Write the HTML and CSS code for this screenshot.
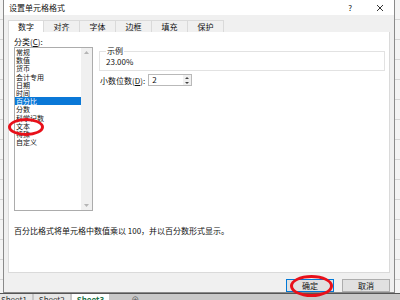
FILE: index.html
```html
<!DOCTYPE html>
<html lang="zh-CN">
  <head>
    <meta charset="UTF-8" />
    <title>设置单元格格式</title>
    <link rel="stylesheet" href="styles.css">
  </head>
  <body>
    <div class="screen">
      <div class="dialog">
        <div class="titlebar">
          <span class="title">设置单元格格式</span>
          <span class="help">?</span>
          <span class="close">
            <svg width="8" height="8" viewBox="0 0 8 8"><path d="M1 1L7 7M7 1L1 7" stroke="#333" stroke-width="1"/></svg>
          </span>
        </div>
        <div class="dialog-body">
          <div class="tabs">
            <div class="tab active">数字</div>
            <div class="tab">对齐</div>
            <div class="tab">字体</div>
            <div class="tab">边框</div>
            <div class="tab">填充</div>
            <div class="tab">保护</div>
          </div>
          <div class="panel">
            <div class="label">分类(<u>C</u>):</div>
            <div class="main-row">
              <div class="listbox">
                <ul class="items">
                  <li>常规</li>
                  <li>数值</li>
                  <li>货币</li>
                  <li>会计专用</li>
                  <li>日期</li>
                  <li>时间</li>
                  <li class="selected">百分比</li>
                  <li>分数</li>
                  <li>科学记数</li>
                  <li>文本</li>
                  <li>特殊</li>
                  <li>自定义</li>
                </ul>
                <div class="scrollbar">
                  <svg width="5" height="3" viewBox="0 0 5 3"><path d="M0 3L2.5 0L5 3Z" fill="#b5b5b5"/></svg>
                  <svg width="5" height="3" viewBox="0 0 5 3"><path d="M0 0L2.5 3L5 0Z" fill="#b5b5b5"/></svg>
                </div>
              </div>
              <div class="options">
                <fieldset class="sample">
                  <legend>示例</legend>
                  <div class="sample-value">23.00%</div>
                </fieldset>
                <div class="spin-row">
                  <span>小数位数(<u>D</u>):</span>
                  <div class="spinbox">
                    <span class="spin-value">2</span>
                    <span class="spin-buttons">
                      <svg width="4" height="2" viewBox="0 0 4 2"><path d="M0 2L2 0L4 2Z" fill="#444"/></svg>
                      <svg width="4" height="2" viewBox="0 0 4 2"><path d="M0 0L2 2L4 0Z" fill="#444"/></svg>
                    </span>
                  </div>
                </div>
              </div>
            </div>
            <p class="desc">百分比格式将单元格中数值乘以 100，并以百分数形式显示。</p>
          </div>
          <div class="footer">
            <button class="btn primary">确定</button>
            <button class="btn">取消</button>
          </div>
        </div>
      </div>
      <div class="sheetbar">
        <span class="sheet">Sheet1</span>
        <span class="sheet">Sheet2</span>
        <span class="sheet current">Sheet3</span>
        <span class="add">&#8853;</span>
      </div>
      <div class="mark mark-text"></div>
      <div class="mark mark-ok"></div>
    </div>
  </body>
</html>
```
FILE: styles.css
```css
body {
  margin: 0;
  font-family: "Noto Sans CJK SC", "Noto Sans", sans-serif;
  font-size: 8px;
  color: #111;
}
.screen {
  width: 400px;
  height: 300px;
  position: relative;
  overflow: hidden;
  background-color: #f4f4f4;
  background-image: repeating-linear-gradient(to bottom, transparent 0, transparent 19px, #d6d6d6 19px, #d6d6d6 20px);
}
.dialog {
  margin-left: 3px;
  width: 390px;
  height: 292px;
  border: 1px solid #8a8a8a;
  border-top: none;
  background-color: #f0f0f0;
  display: flex;
  flex-direction: column;
}
.titlebar {
  height: 15px;
  background-color: #fff;
  display: flex;
  align-items: center;
  padding: 0 10px 0 5px;
}
.title {
  flex: 1;
  line-height: 15px;
}
.help {
  margin-right: 24px;
}
.close {
  display: flex;
}
.dialog-body {
  flex: 1;
  display: flex;
  flex-direction: column;
  padding: 5px 4px 0 4px;
}
.tabs {
  display: flex;
  height: 12px;
}
.tab {
  width: 35px;
  line-height: 11px;
  text-align: center;
  border: 1px solid #dadada;
  border-bottom: none;
  border-left: none;
  background-color: #f0f0f0;
}
.tab.active {
  background-color: #fff;
  border-left: 1px solid #dadada;
  width: 34px;
}
.panel {
  height: 241px;
  box-sizing: border-box;
  background-color: #fff;
  border: 1px solid #dadada;
  border-top: none;
  padding: 5px 0 0 5px;
  display: flex;
  flex-direction: column;
}
.label {
  line-height: 10px;
}
.main-row {
  display: flex;
  gap: 6px;
}
.listbox {
  width: 79px;
  height: 164px;
  box-sizing: border-box;
  border: 1px solid #acacac;
  display: flex;
}
.items {
  list-style: none;
  margin: 0;
  padding: 0;
  flex: 1;
  font-size: 7px;
}
.items li {
  height: 8.2px;
  line-height: 8.2px;
  padding-left: 1px;
}
.items li.selected {
  background-color: #0a78d7;
  color: #fff;
}
.scrollbar {
  width: 11px;
  background-color: #f0f0f0;
  display: flex;
  flex-direction: column;
  justify-content: space-between;
  align-items: center;
  padding: 3px 0;
}
.options {
  width: 286px;
}
.sample {
  margin: 0;
  padding: 0 6px 3px 6px;
  border: 1px solid #e2e2e2;
}
.sample legend {
  padding: 0 1px;
  line-height: 8px;
}
.sample-value {
  line-height: 10px;
  padding-top: 2px;
}
.spin-row {
  display: flex;
  align-items: center;
  gap: 3px;
  margin-top: 3px;
  padding-left: 1px;
}
.spinbox {
  width: 44px;
  height: 12px;
  box-sizing: border-box;
  border: 1px solid #b9b9b9;
  display: flex;
}
.spin-value {
  flex: 1;
  padding-left: 3px;
  line-height: 10px;
}
.spin-buttons {
  width: 8px;
  background-color: #f0f0f0;
  display: flex;
  flex-direction: column;
  justify-content: space-around;
  align-items: center;
}
.desc {
  margin: 15px 0 0 0;
  line-height: 10px;
}
.footer {
  display: flex;
  justify-content: flex-end;
  gap: 8px;
  padding: 6px 0 0 0;
}
.btn {
  width: 48px;
  height: 13px;
  padding: 0;
  font-family: inherit;
  font-size: 8px;
  color: #111;
  background-color: #e1e1e1;
  border: 1px solid #adadad;
}
.btn.primary {
  border-color: #0078d7;
}
.sheetbar {
  height: 8px;
  border-top: 1px solid #555;
  background-color: #c8c8c8;
  display: flex;
  gap: 2px;
  margin-left: -4px;
  line-height: 12px;
}
.sheet {
  padding: 0 5px;
  background-color: #e6e6e6;
  color: #333;
}
.sheet.current {
  background-color: #fff;
  color: #217346;
  font-weight: bold;
}
.add {
  margin-left: 20px;
  color: #555;
}
.mark {
  position: absolute;
  border: 3px solid #e8101a;
  border-radius: 50%;
  box-sizing: border-box;
}
.mark-text {
  left: 8px;
  top: 118px;
  width: 36px;
  height: 18px;
}
.mark-ok {
  left: 290px;
  top: 275px;
  width: 43px;
  height: 22px;
}
```
